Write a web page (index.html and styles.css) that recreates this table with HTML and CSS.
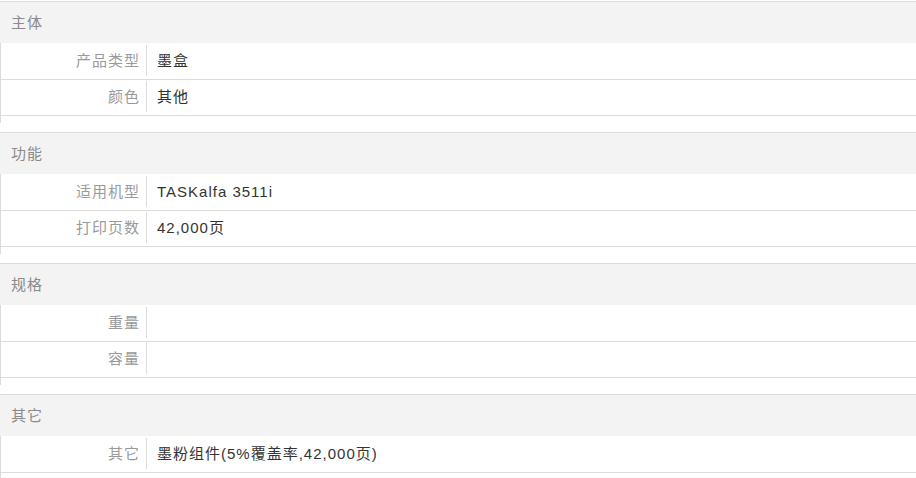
FILE: index.html
```html
<!DOCTYPE html>
<html lang="zh-CN">
<head>
<meta charset="utf-8">
<title>参数</title>
<link rel="stylesheet" href="styles.css">
</head>
<body>
<div class="params">
  <section class="group">
    <div class="group-title">主体</div>
    <div class="rows">
      <div class="row"><div class="label">产品类型</div><div class="value">墨盒</div></div>
      <div class="row"><div class="label">颜色</div><div class="value">其他</div></div>
    </div>
  </section>
  <section class="group">
    <div class="group-title">功能</div>
    <div class="rows">
      <div class="row"><div class="label">适用机型</div><div class="value">TASKalfa 3511i</div></div>
      <div class="row"><div class="label">打印页数</div><div class="value">42,000页</div></div>
    </div>
  </section>
  <section class="group">
    <div class="group-title">规格</div>
    <div class="rows">
      <div class="row"><div class="label">重量</div><div class="value"></div></div>
      <div class="row"><div class="label">容量</div><div class="value"></div></div>
    </div>
  </section>
  <section class="group">
    <div class="group-title">其它</div>
    <div class="rows">
      <div class="row"><div class="label">其它</div><div class="value">墨粉组件(5%覆盖率,42,000页)</div></div>
    </div>
  </section>
</div>
</body>
</html>
```
FILE: styles.css
```css
html, body {
  margin: 0;
  padding: 0;
  background: #fff;
}
body {
  font-family: "Liberation Sans", "Noto Sans CJK SC", sans-serif;
  font-size: 15px;
  letter-spacing: 1px;
}
.params {
  padding-top: 1px;
}
.group {
  margin-bottom: 9px;
}
.group-title {
  border-top: 1px solid #dcdcdc;
  background: #f3f3f3;
  height: 41px;
  line-height: 41px;
  padding-left: 11px;
  color: #8a8a8a;
}
.rows {
  border-left: 1px solid #dcdcdc;
  padding-top: 1px;
  padding-bottom: 7px;
}
.row {
  display: flex;
  height: 35px;
  border-bottom: 1px solid #dcdcdc;
  margin-left: -1px;
}
.label {
  box-sizing: border-box;
  width: 147px;
  margin: 1px 0 3px;
  padding-right: 6px;
  border-right: 1px solid #dcdcdc;
  text-align: right;
  line-height: 31px;
  color: #9a9a9a;
}
.value {
  flex: 1;
  padding-left: 10px;
  line-height: 33px;
  color: #333;
}
```
